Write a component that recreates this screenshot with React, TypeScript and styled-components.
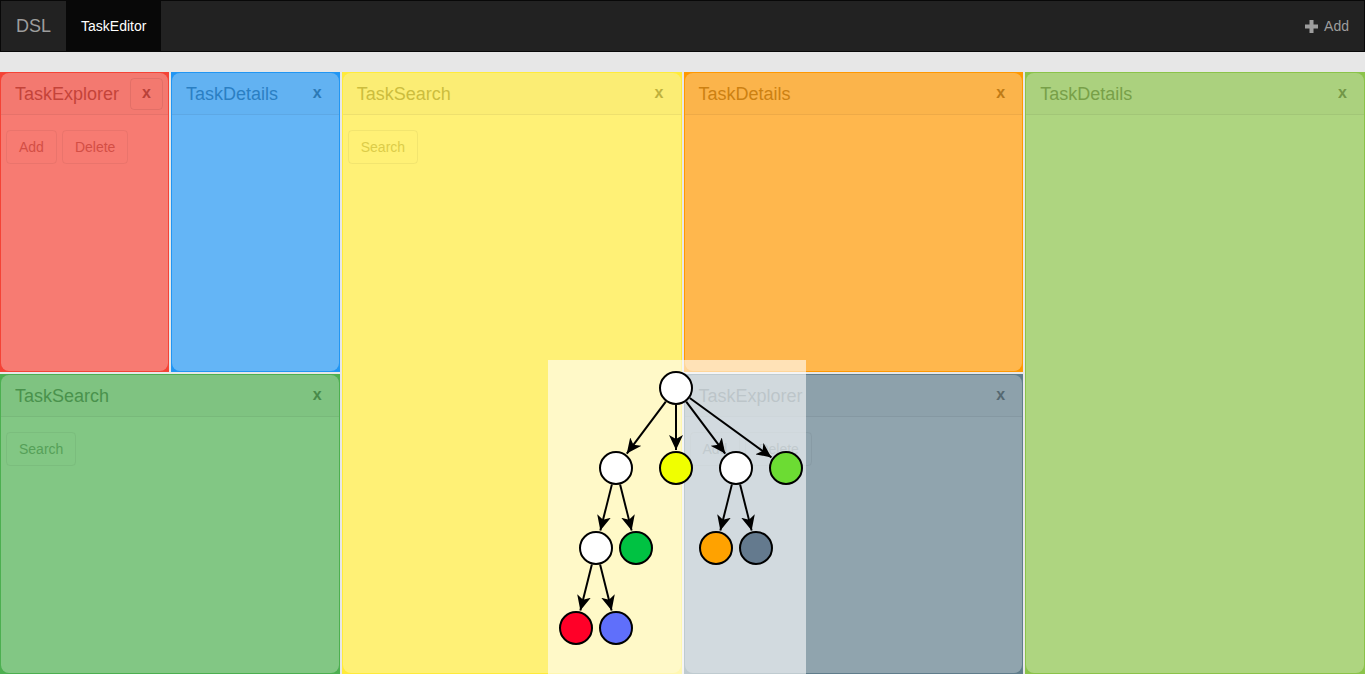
import React from "react";
import styled, { createGlobalStyle } from "styled-components";

const Global = createGlobalStyle`
  html, body { margin: 0; padding: 0; }
  body {
    background: #e7e7e7;
    font-family: "Liberation Sans", Arial, sans-serif;
    font-size: 14px;
    overflow: hidden;
  }
  * { box-sizing: border-box; }
`;

const Navbar = styled.nav`
  height: 52px;
  background: #222;
  border: 1px solid #080808;
  display: flex;
  align-items: stretch;
  margin-bottom: 20px;
`;

const Brand = styled.div`
  padding: 0 15px;
  display: flex;
  align-items: center;
  font-size: 18px;
  color: #9d9d9d;
`;

const NavItem = styled.div<{ $active?: boolean }>`
  padding: 0 15px 0 15px;
  display: flex;
  align-items: center;
  gap: 6px;
  font-size: 14px;
  color: ${(p) => (p.$active ? "#fff" : "#9d9d9d")};
  background: ${(p) => (p.$active ? "#080808" : "transparent")};
`;

const Spacer = styled.div`
  flex: 1;
`;

const Board = styled.main`
  position: relative;
  height: calc(100vh - 72px);
  display: grid;
  grid-template-columns: repeat(4, 1fr);
  gap: 2px;
`;

const Column = styled.div<{ $rows?: number }>`
  display: grid;
  grid-template-rows: repeat(${(p) => p.$rows ?? 1}, 1fr);
  gap: 2px;
  min-height: 0;
`;

const Split = styled.div`
  display: grid;
  grid-template-columns: 1fr 1fr;
  gap: 2px;
  min-height: 0;
`;

const PanelOuter = styled.section<{ $color: string }>`
  background: ${(p) => p.$color};
  padding: 1px;
  min-height: 0;
  display: flex;
`;

const PanelInner = styled.div`
  flex: 1;
  border-radius: 8px;
  background: rgba(255, 255, 255, 0.3);
  display: flex;
  flex-direction: column;
  overflow: hidden;
`;

const Heading = styled.header`
  height: 42px;
  padding: 1px 5px 0 14px;
  display: flex;
  align-items: center;
  justify-content: space-between;
  border-bottom: 1px solid rgba(0, 0, 0, 0.05);
  background: rgba(0, 0, 0, 0.015);
`;

const Title = styled.h3<{ $color: string }>`
  margin: 0;
  font-size: 18px;
  font-weight: normal;
  color: color-mix(in srgb, ${(p) => p.$color} 74%, black);
  opacity: 0.75;
`;

const CloseButton = styled.button<{ $focused?: boolean; $color: string }>`
  width: 33px;
  height: 32px;
  padding: 0 0 3px 0;
  border-radius: 4px;
  border: 1px solid ${(p) => (p.$focused ? "rgba(0,0,0,0.1)" : "transparent")};
  background: transparent;
  font-family: "Liberation Sans", Arial, sans-serif;
  font-size: 16px;
  font-weight: bold;
  color: color-mix(in srgb, ${(p) => p.$color} 65%, black);
  opacity: 0.7;
  display: flex;
  align-items: center;
  justify-content: center;
`;

const Body = styled.div`
  padding: 15px 5px;
  display: flex;
  gap: 5px;
`;

const Button = styled.button<{ $color: string }>`
  height: 34px;
  padding: 0 12px;
  border-radius: 4px;
  border: 1px solid rgba(0, 0, 0, 0.08);
  background: transparent;
  font-family: "Liberation Sans", Arial, sans-serif;
  font-size: 14px;
  color: color-mix(in srgb, ${(p) => p.$color} 78%, black);
  opacity: 0.62;
`;

const Overlay = styled.div`
  position: absolute;
  left: 548px;
  top: 288px;
  width: 258px;
  bottom: 0;
  background: rgba(255, 255, 255, 0.6);
`;

type PanelProps = {
  title: string;
  color: string;
  buttons?: string[];
  focused?: boolean;
};

function Panel({ title, color, buttons = [], focused }: PanelProps) {
  return (
    <PanelOuter $color={color}>
      <PanelInner>
        <Heading>
          <Title $color={color}>{title}</Title>
          <CloseButton $focused={focused} $color={color}>
            x
          </CloseButton>
        </Heading>
        {buttons.length > 0 && (
          <Body>
            {buttons.map((b) => (
              <Button key={b} $color={color}>
                {b}
              </Button>
            ))}
          </Body>
        )}
      </PanelInner>
    </PanelOuter>
  );
}

type Node = { id: string; x: number; y: number; fill: string };
const nodes: Node[] = [
  { id: "root", x: 676, y: 388, fill: "#ffffff" },
  { id: "a", x: 616, y: 468, fill: "#ffffff" },
  { id: "b", x: 676, y: 468, fill: "#f0ff00" },
  { id: "c", x: 736, y: 468, fill: "#ffffff" },
  { id: "d", x: 786, y: 468, fill: "#6cdc33" },
  { id: "a1", x: 596, y: 548, fill: "#ffffff" },
  { id: "a2", x: 636, y: 548, fill: "#00c242" },
  { id: "c1", x: 716, y: 548, fill: "#ffa200" },
  { id: "c2", x: 756, y: 548, fill: "#647a8e" },
  { id: "a11", x: 576, y: 628, fill: "#ff0028" },
  { id: "a12", x: 616, y: 628, fill: "#5f6ffb" },
];
const edges: [string, string][] = [
  ["root", "a"],
  ["root", "b"],
  ["root", "c"],
  ["root", "d"],
  ["a", "a1"],
  ["a", "a2"],
  ["c", "c1"],
  ["c", "c2"],
  ["a1", "a11"],
  ["a1", "a12"],
];

function Tree() {
  const byId = Object.fromEntries(nodes.map((n) => [n.id, n]));
  const R = 17;
  return (
    <svg width="258" height="314" viewBox="548 360 258 314">
      <defs>
        <marker
          id="arrow"
          markerUnits="userSpaceOnUse"
          markerWidth="16"
          markerHeight="14"
          refX="15"
          refY="7"
          orient="auto"
        >
          <path d="M0,0 L15,7 L0,14 L4,7 Z" fill="#000" />
        </marker>
      </defs>
      {edges.map(([p, c]) => {
        const a = byId[p];
        const b = byId[c];
        const dx = b.x - a.x;
        const dy = b.y - a.y;
        const len = Math.hypot(dx, dy);
        const ux = dx / len;
        const uy = dy / len;
        return (
          <line
            key={p + c}
            x1={a.x + ux * R}
            y1={a.y + uy * R}
            x2={b.x - ux * (R + 1)}
            y2={b.y - uy * (R + 1)}
            stroke="#000"
            strokeWidth="2"
            markerEnd="url(#arrow)"
          />
        );
      })}
      {nodes.map((n) => (
        <circle key={n.id} cx={n.x} cy={n.y} r="16" fill={n.fill} stroke="#000" strokeWidth="2" />
      ))}
    </svg>
  );
}

function PlusIcon() {
  return (
    <svg width="13" height="13" viewBox="0 0 13 13">
      <rect x="4.5" y="0" width="4" height="13" fill="#9d9d9d" />
      <rect x="0" y="4.5" width="13" height="4" fill="#9d9d9d" />
    </svg>
  );
}

export default function App() {
  return (
    <>
      <Global />
      <Navbar>
        <Brand>DSL</Brand>
        <NavItem $active>TaskEditor</NavItem>
        <Spacer />
        <NavItem>
          <PlusIcon />
          Add
        </NavItem>
      </Navbar>
      <Board>
        <Column $rows={2}>
          <Split>
            <Panel title="TaskExplorer" color="#f44336" buttons={["Add", "Delete"]} focused />
            <Panel title="TaskDetails" color="#2196f3" />
          </Split>
          <Panel title="TaskSearch" color="#4caf50" buttons={["Search"]} />
        </Column>
        <Column>
          <Panel title="TaskSearch" color="#ffeb3b" buttons={["Search"]} />
        </Column>
        <Column $rows={2}>
          <Panel title="TaskDetails" color="#ff9800" />
          <Panel title="TaskExplorer" color="#607d8b" buttons={["Add", "Delete"]} />
        </Column>
        <Column>
          <Panel title="TaskDetails" color="#8bc34a" />
        </Column>
        <Overlay>
          <Tree />
        </Overlay>
      </Board>
    </>
  );
}
